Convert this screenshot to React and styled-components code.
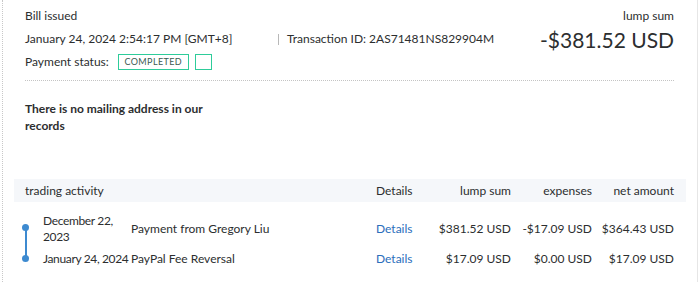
import styled, { createGlobalStyle } from "styled-components"

const Global = createGlobalStyle`
  body {
    margin: 0;
    font-family: Lato, "Open Sans", sans-serif;
    color: #2c2e2f;
    background: #fff;
  }
`

const Page = styled.div`
  box-sizing: border-box;
  width: 696px;
  height: 282px;
  margin-left: 2px;
  border-left: 1px dotted #c8c8c8;
  border-right: 1px solid #e6e6e6;
  padding: 0 11px 0 11px;
`

const Summary = styled.div`
  padding: 8px 12px 0 11px;
`

const TopRow = styled.div`
  display: flex;
  justify-content: space-between;
`

const Meta = styled.div`
  display: flex;
  flex-direction: column;
`

const Label = styled.div`
  font-size: 12px;
  line-height: 16px;
  height: ${p => p.h || 16}px;
`

const Line = styled.div`
  display: flex;
  align-items: center;
  font-size: 12px;
  line-height: 16px;
  white-space: nowrap;
  margin-top: ${p => p.mt || 0}px;
`

const Stamp = styled.span`
  display: inline-block;
  width: 253px;
`

const Separator = styled.span`
  display: inline-block;
  width: 1px;
  height: 11px;
  background: #b8b8b8;
  margin-right: 8px;
`

const Badge = styled.span`
  display: inline-flex;
  align-items: center;
  justify-content: center;
  box-sizing: border-box;
  height: 16px;
  width: ${p => p.w}px;
  border: 1px solid #2ecc9a;
  color: #3b5a52;
  font-size: 9px;
  letter-spacing: 0.4px;
  margin-left: ${p => p.ml}px;
`

const Amount = styled.div`
  display: flex;
  flex-direction: column;
  align-items: flex-end;
`

const Big = styled.div`
  font-size: 21px;
  line-height: 28px;
  margin-top: 2px;
`

const Dotted = styled.div`
  border-top: 1px dotted #c4c4c4;
  margin-top: 10px;
`

const Notice = styled.div`
  width: 200px;
  font-size: 12px;
  font-weight: 700;
  line-height: 17px;
  margin-top: 19px;
`

const Table = styled.div`
  margin-top: 45px;
`

const HeadRow = styled.div`
  display: grid;
  grid-template-columns: 1fr 55px 80px 81px 82px;
  align-items: center;
  height: 23px;
  background: #f5f7fa;
  padding: 0 12px 0 11px;
  font-size: 12px;
  margin-bottom: 6px;
`

const Cell = styled.div`
  text-align: ${p => (p.right ? "right" : "left")};
  color: ${p => (p.link ? "#2a6ebb" : "inherit")};
  white-space: nowrap;
`

const Row = styled.div`
  display: grid;
  grid-template-columns: 18px 88px 1fr 55px 80px 81px 82px;
  align-items: center;
  padding: 0 12px 0 11px;
  font-size: 12px;
  line-height: 16px;
  height: ${p => p.h}px;
`

const DateCell = styled.div`
  letter-spacing: -0.35px;
`

const Track = styled.div`
  position: relative;
  align-self: stretch;
`

const Dot = styled.span`
  position: absolute;
  left: -3px;
  top: ${p => p.top}px;
  width: 7px;
  height: 7px;
  border-radius: 50%;
  background: #3d8ad0;
`

const Stem = styled.span`
  position: absolute;
  left: 0;
  top: ${p => p.top}px;
  width: 1.5px;
  height: ${p => p.len}px;
  background: #3d8ad0;
`

const rows = [
  {
    date: "December 22, 2023",
    desc: "Payment from Gregory Liu",
    gross: "$381.52 USD",
    fee: "-$17.09 USD",
    net: "$364.43 USD",
    h: 42,
    dot: 16,
  },
  {
    date: "January 24, 2024",
    desc: "PayPal Fee Reversal",
    gross: "$17.09 USD",
    fee: "$0.00 USD",
    net: "$17.09 USD",
    h: 18,
    dot: 5,
  },
]

export default function App() {
  return (
    <>
      <Global />
      <Page>
        <Summary>
          <TopRow>
            <Meta>
              <Label h={23}>Bill issued</Label>
              <Line>
                <Stamp>January 24, 2024 2:54:17 PM [GMT+8]</Stamp>
                <Separator />
                Transaction ID: 2AS71481NS829904M
              </Line>
              <Line mt={7}>
                Payment status:
                <Badge w={71} ml={9}>COMPLETED</Badge>
                <Badge w={17} ml={6} />
              </Line>
            </Meta>
            <Amount>
              <Label>lump sum</Label>
              <Big>-$381.52 USD</Big>
            </Amount>
          </TopRow>
          <Dotted />
          <Notice>There is no mailing address in our records</Notice>
        </Summary>
        <Table>
          <HeadRow>
            <Cell>trading activity</Cell>
            <Cell>Details</Cell>
            <Cell right>lump sum</Cell>
            <Cell right>expenses</Cell>
            <Cell right>net amount</Cell>
          </HeadRow>
          {rows.map((r, i) => (
            <Row key={i} h={r.h}>
              <Track>
                {i === 0 && <Stem top={19} len={31} />}
                <Dot top={r.dot} />
              </Track>
              <DateCell>{r.date}</DateCell>
              <Cell>{r.desc}</Cell>
              <Cell link>Details</Cell>
              <Cell right>{r.gross}</Cell>
              <Cell right>{r.fee}</Cell>
              <Cell right>{r.net}</Cell>
            </Row>
          ))}
        </Table>
      </Page>
    </>
  )
}
